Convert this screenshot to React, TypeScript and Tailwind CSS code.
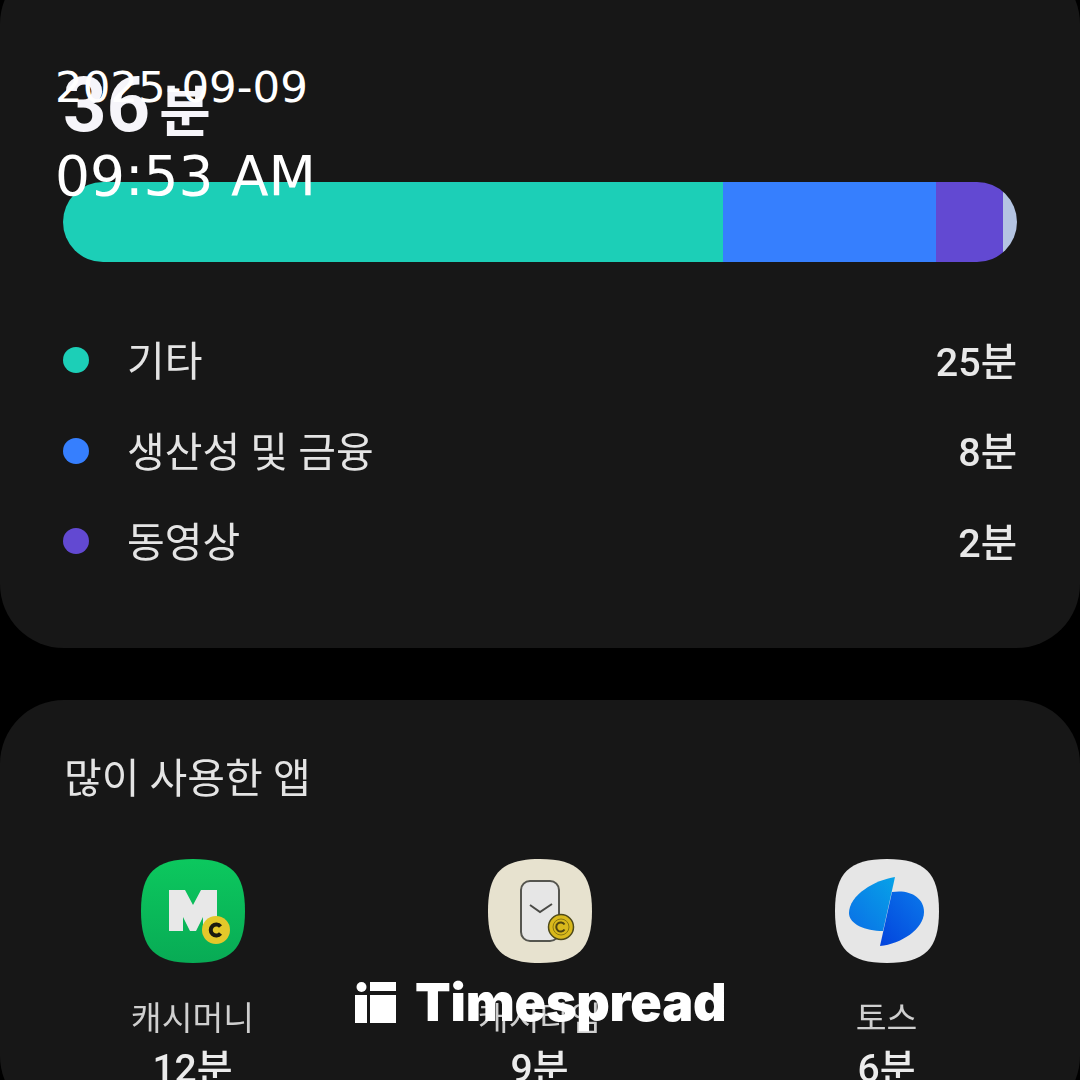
const KR = "font-['Roboto','Noto_Sans_CJK_KR',sans-serif]";
const SQ = "M52 0C90 0 104 14 104 52C104 90 90 104 52 104C14 104 0 90 0 52C0 14 14 0 52 0Z";

function CashMoney() {
  return (
    <svg width="104" height="104" viewBox="0 0 104 104">
      <defs>
        <linearGradient id="g1" x1="0" y1="0" x2="0" y2="1">
          <stop offset="0" stopColor="#0cc85e" />
          <stop offset="1" stopColor="#08ab55" />
        </linearGradient>
      </defs>
      <path d={SQ} fill="url(#g1)" />
      <path d="M28 31H44L52 46L60 31H76V72H62V58L55 72H49L42 58V72H28Z" fill="#e8e8e8" />
      <circle cx="75" cy="71" r="14" fill="#e3c82a" />
      <path d="M79.5 67.5A5.5 5.5 0 1 0 79.5 74.5" fill="none" stroke="#1a1a10" strokeWidth="4" />
    </svg>
  );
}

function CashTimer() {
  return (
    <svg width="104" height="104" viewBox="0 0 104 104">
      <path d={SQ} fill="#e7e2cf" />
      <rect x="33" y="22" width="38" height="60" rx="9" fill="#e6e6e6" stroke="#55554f" strokeWidth="2" />
      <path d="M42 46L52 53L64 45" fill="none" stroke="#4a4a46" strokeWidth="2" />
      <circle cx="73" cy="68" r="12.5" fill="#d9b91c" stroke="#4f4a1a" strokeWidth="1.5" />
      <circle cx="73" cy="68" r="8" fill="none" stroke="#8a7812" strokeWidth="1" />
      <path d="M76.5 65.5A4.5 4.5 0 1 0 76.5 70.5" fill="none" stroke="#4f4510" strokeWidth="2" />
    </svg>
  );
}

function Toss() {
  return (
    <svg width="104" height="104" viewBox="0 0 104 104">
      <defs>
        <linearGradient id="g2" x1="1" y1="0" x2="0" y2="1">
          <stop offset="0" stopColor="#07a3e8" />
          <stop offset="1" stopColor="#0a6fe6" />
        </linearGradient>
        <linearGradient id="g3" x1="1" y1="0" x2="0" y2="1">
          <stop offset="0" stopColor="#0a78ea" />
          <stop offset="1" stopColor="#0343dd" />
        </linearGradient>
      </defs>
      <path d={SQ} fill="#e6e6e6" />
      <path d="M60 18C40 21 14 36 14 54C14 65 30 72 48 72Z" fill="url(#g2)" />
      <path d="M57 33C74 30 89 38 89 53C89 70 66 85 45 87Z" fill="url(#g3)" />
    </svg>
  );
}

function LegendRow({ color, name, value }: { color: string; name: string; value: string }) {
  return (
    <div className="flex h-[90.5px] items-center">
      <div className={`h-[26px] w-[26px] rounded-full ${color}`} />
      <span className="ml-[38px] flex-1 pt-[5px] text-[41px] leading-none text-[#e4e4e4] blur-[0.5px]">{name}</span>
      <span className="pt-[4px] text-[39.5px] font-medium leading-none text-[#e8e8e8] blur-[0.5px]">{value}</span>
    </div>
  );
}

function AppCol({ icon, name, value }: { icon: React.ReactNode; name: string; value: string }) {
  return (
    <div className="flex w-[347px] shrink-0 flex-col items-center">
      {icon}
      <span className="mt-[36px] text-[33.5px] leading-[40px] text-[#cfcfcf] blur-[0.5px]">{name}</span>
      <span className="mt-[10px] text-[39px] font-medium leading-[40px] text-[#ebebeb] blur-[0.5px]">{value}</span>
    </div>
  );
}

export default function App() {
  return (
    <div className={`relative h-[1080px] w-[1080px] overflow-hidden bg-black ${KR}`}>
      <div className="-mt-[40px] h-[688px] rounded-[64px] bg-[#171717] px-[63px] pt-[108px]">
        <div className="flex h-[114px] items-baseline font-bold leading-[74px] text-[#f6f5fa] blur-[0.5px]">
          <span className="text-[76px]">36</span>
          <span className="ml-[9px] text-[56px]">분</span>
        </div>
        <div className="flex h-[80px] overflow-hidden rounded-full">
          <div className="w-[660px] bg-[#1ccfb7]" />
          <div className="w-[213px] bg-[#367ffe]" />
          <div className="w-[67px] bg-[#6249d2]" />
          <div className="flex-1 bg-[#b4c4e2]" />
        </div>
        <div className="mt-[53px]">
          <LegendRow color="bg-[#1ccfb7]" name="기타" value="25분" />
          <LegendRow color="bg-[#367ffe]" name="생산성 및 금융" value="8분" />
          <LegendRow color="bg-[#6249d2]" name="동영상" value="2분" />
        </div>
      </div>

      <div className="mt-[52px] h-[420px] rounded-[64px] bg-[#171717] pt-[56px]">
        <div className="pl-[64px] text-[41px] leading-[46px] text-[#e4e4e4] blur-[0.5px]">많이 사용한 앱</div>
        <div className="mt-[57px] flex pl-[19px]">
          <AppCol icon={<CashMoney />} name="캐시머니" value="12분" />
          <AppCol icon={<CashTimer />} name="캐시타임" value="9분" />
          <AppCol icon={<Toss />} name="토스" value="6분" />
        </div>
      </div>

      <div className="absolute left-[55px] top-[61px] font-['DejaVu_Sans',sans-serif] text-[43.5px] leading-[52px] text-white">
        2025-09-09
      </div>
      <div className="absolute left-[55px] top-[144px] font-['DejaVu_Sans',sans-serif] text-[55px] leading-[64px] text-white">
        09:53 AM
      </div>

      <div className="absolute left-[355px] top-[982px] flex items-center gap-[19px]">
        <svg width="41" height="41" viewBox="0 0 41 41" fill="#fff">
          <circle cx="6.5" cy="5" r="5" />
          <rect x="0" y="13" width="12" height="28" />
          <rect x="15" y="0" width="26" height="9" />
          <rect x="15" y="13" width="26" height="28" />
        </svg>
        <span className="font-['Inter',sans-serif] text-[52px] font-black leading-[41px] tracking-[-0.2px] text-white">
          Timespread
        </span>
      </div>
    </div>
  );
}
